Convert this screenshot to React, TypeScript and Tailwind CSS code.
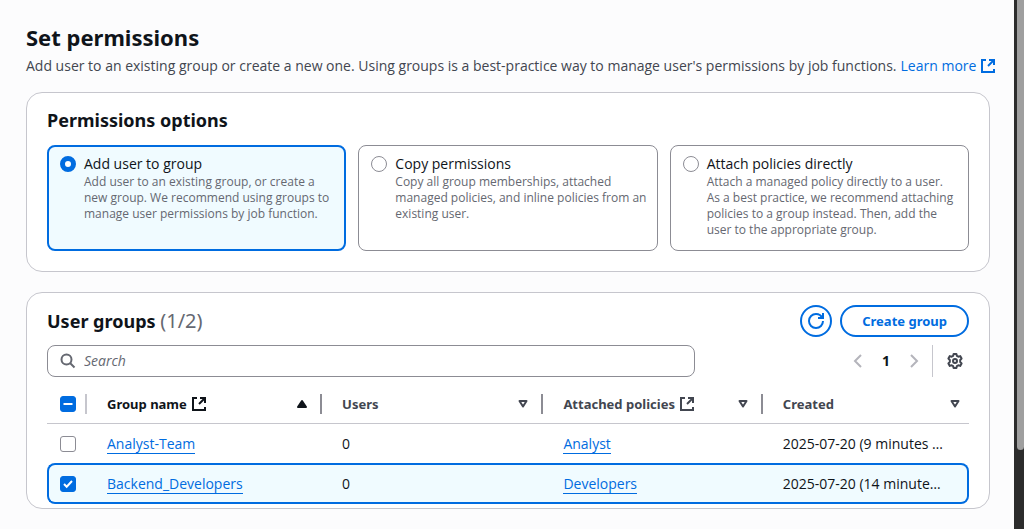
import { type ReactNode } from "react";

const ICON = "h-4 w-4 shrink-0";

function ExternalIcon() {
  return (
    <svg viewBox="0 0 16 16" className={ICON} fill="none" stroke="currentColor" strokeWidth="2" aria-hidden="true">
      <path d="M10 2h4v4" strokeLinecap="square" shapeRendering="crispEdges" />
      <path d="m8 8 6-6" />
      <path d="M6 2H2v12h12v-3" shapeRendering="crispEdges" />
    </svg>
  );
}

function SearchIcon() {
  return (
    <svg viewBox="0 0 16 16" className={ICON} fill="none" stroke="currentColor" strokeWidth="2" aria-hidden="true">
      <circle cx="6.5" cy="6.5" r="5" />
      <path d="m14.5 14.5-4.5-4.5" />
    </svg>
  );
}

function RefreshIcon() {
  return (
    <svg viewBox="0 0 16 16" className={ICON} fill="none" stroke="currentColor" strokeWidth="2" aria-hidden="true">
      <path d="M10 5h5V0" />
      <path d="M15 8a6.957 6.957 0 0 1-7 7 6.957 6.957 0 0 1-7-7 6.957 6.957 0 0 1 7-7 6.87 6.87 0 0 1 6.3 4" />
    </svg>
  );
}

function AngleIcon({ d }: { d: string }) {
  return (
    <svg viewBox="0 0 16 16" className={ICON} fill="none" stroke="currentColor" strokeWidth="2" aria-hidden="true">
      <path d={d} />
    </svg>
  );
}

function GearIcon() {
  return (
    <svg viewBox="0 0 16 16" className={ICON} fill="none" stroke="currentColor" strokeWidth="2" strokeLinejoin="round" aria-hidden="true">
      <path d="M6.6 1h2.8l.5 1.9 1.4.8 1.9-.6 1.4 2.4L13.2 7v2l1.4 1.5-1.4 2.4-1.9-.6-1.4.8L9.4 15H6.6l-.5-1.9-1.4-.8-1.9.6-1.4-2.4L2.8 9V7L1.4 5.5l1.4-2.4 1.9.6 1.4-.8z" />
      <circle cx="8" cy="8" r="2" />
    </svg>
  );
}

function SortIcon({ active = false }: { active?: boolean }) {
  return (
    <svg viewBox="0 0 16 16" className={ICON} aria-hidden="true">
      {active ? (
        <path d="M4 11h8L8 5z" fill="currentColor" stroke="currentColor" strokeWidth="2" strokeLinejoin="round" />
      ) : (
        <path d="M4.5 5h7L8 10.5z" fill="none" stroke="currentColor" strokeWidth="2" strokeLinejoin="round" />
      )}
    </svg>
  );
}

function Card({ children, className = "" }: { children: ReactNode; className?: string }) {
  return <section className={`rounded-2xl border border-[#c6c6cd] bg-white px-5 ${className}`}>{children}</section>;
}

const options = [
  {
    id: "add",
    title: "Add user to group",
    text: "Add user to an existing group, or create a new group. We recommend using groups to manage user permissions by job function.",
  },
  {
    id: "copy",
    title: "Copy permissions",
    text: "Copy all group memberships, attached managed policies, and inline policies from an existing user.",
  },
  {
    id: "attach",
    title: "Attach policies directly",
    text: "Attach a managed policy directly to a user. As a best practice, we recommend attaching policies to a group instead. Then, add the user to the appropriate group.",
  },
];

function OptionTile({ id, title, text, selected }: { id: string; title: string; text: string; selected: boolean }) {
  return (
    <label
      htmlFor={id}
      className={`flex gap-2 rounded-lg ${
        selected ? "border-2 border-[#006ce0] bg-[#f0fbff] py-[7px] pr-[9px] pl-[11px]" : "border border-[#8c8c94] bg-white py-2 pr-[10px] pl-3"
      }`}
    >
      <input
        id={id}
        type="radio"
        name="permission"
        defaultChecked={selected}
        className="mt-[2px] h-4 w-4 shrink-0 appearance-none rounded-full border border-[#8c8c94] bg-white checked:border-[5px] checked:border-[#006ce0]"
      />
      <span className="flex min-w-0 flex-col pb-1">
        <span className="text-sm leading-5 text-[#0f141a]">{title}</span>
        <span className="text-xs leading-4 text-[#656871]">{text}</span>
      </span>
    </label>
  );
}

const CHECKBOX = "block h-4 w-4 appearance-none rounded-[3px] border";

function Checkbox({ label, state }: { label: string; state: "on" | "off" | "mixed" }) {
  return (
    <span className="relative block h-4 w-4">
      <input
        type="checkbox"
        aria-label={label}
        defaultChecked={state === "on"}
        className={`${CHECKBOX} ${state === "off" ? "border-[#8c8c94] bg-white" : "border-[#006ce0] bg-[#006ce0]"}`}
      />
      {state !== "off" && (
        <svg viewBox="0 0 16 16" className="pointer-events-none absolute inset-0 h-4 w-4" fill="none" stroke="white" strokeWidth="2" aria-hidden="true">
          <path d={state === "on" ? "m4 8 2.7 2.7L12 5" : "M3.5 8h9"} />
        </svg>
      )}
    </span>
  );
}

const STRONG = "font-['Noto_Sans','Open_Sans',sans-serif] font-bold";

function HeaderCell({ children, external, active, last }: { children: ReactNode; external?: boolean; active?: boolean; last?: boolean }) {
  return (
    <th scope="col" className={`border-b border-[#c6c6cd] p-0 text-left ${active ? "text-[#0f141a]" : "text-[#424650]"}`}>
      <div className="flex h-[30px] items-center">
        <div className={`flex h-5 flex-1 items-center gap-1 pl-5 ${last ? "pr-[6px]" : "border-r-2 border-[#8c8c94] pr-[10px]"}`}>
          <span className={`text-[13px] leading-5 ${STRONG}`}>{children}</span>
          {external && <ExternalIcon />}
          <button type="button" aria-label="Sort" className="ml-auto">
            <SortIcon active={active} />
          </button>
        </div>
      </div>
    </th>
  );
}

const rows = [
  { name: "Analyst-Team", users: 0, policy: "Analyst", created: "2025-07-20 (9 minutes ago)", selected: false },
  { name: "Backend_Developers", users: 0, policy: "Developers", created: "2025-07-20 (14 minutes ago)", selected: true },
];

const LINK = "border-b border-[#006ce0] text-[#006ce0]";

export default function App() {
  return (
    <div className="flex h-screen overflow-hidden bg-[#fcfcfd] font-['Open_Sans','Noto_Sans',sans-serif] text-sm leading-5 text-[#0f141a]">
      <main className="flex min-w-0 flex-1 flex-col gap-5 pt-[22px] pr-6 pl-[26px]">
        <header className="-mb-1 flex flex-col gap-1">
          <h1 className={`text-[22px] leading-[30px] ${STRONG}`}>Set permissions</h1>
          <p className="flex items-center gap-1 whitespace-nowrap text-[#424650]">
            <span>
              Add user to an existing group or create a new one. Using groups is a best-practice way to manage user's permissions by job functions.
            </span>
            <a href="#" className="flex items-center gap-1 text-[#006ce0]">
              Learn more
              <ExternalIcon />
            </a>
          </p>
        </header>

        <Card className="pt-[15px] pb-5">
          <h2 className={`mb-[13px] text-lg leading-6 ${STRONG}`}>Permissions options</h2>
          <div className="grid grid-cols-3 gap-3">
            {options.map((o, i) => (
              <OptionTile key={o.id} {...o} selected={i === 0} />
            ))}
          </div>
        </Card>

        <Card className="pt-3 pb-1">
          <div className="flex items-center gap-2">
            <h2 className={`flex-1 text-lg leading-6 ${STRONG}`}>
              User groups <span className="text-xl leading-6 font-normal text-[#656871]">(1/2)</span>
            </h2>
            <button type="button" aria-label="Refresh" className="flex h-8 w-8 items-center justify-center rounded-full border-2 border-[#006ce0] text-[#006ce0]">
              <RefreshIcon />
            </button>
            <button type="button" className={`h-8 rounded-full border-2 border-[#006ce0] px-5 text-[13px] text-[#006ce0] ${STRONG}`}>
              Create group
            </button>
          </div>

          <div className="mt-2 flex items-center">
            <label className="flex h-8 w-[648px] items-center gap-2 rounded-lg border border-[#8c8c94] px-3 text-[#656871]">
              <SearchIcon />
              <input type="search" aria-label="Search" placeholder="Search" className="min-w-0 flex-1 outline-none placeholder:text-[#656871] placeholder:italic" />
            </label>
            <div className="ml-auto flex h-8 items-center">
              <button type="button" aria-label="Previous page" className="text-[#b4b4bb]">
                <AngleIcon d="M11 2 5 8l6 6" />
              </button>
              <button type="button" className="w-10 text-center font-bold">1</button>
              <button type="button" aria-label="Next page" className="text-[#b4b4bb]">
                <AngleIcon d="m5 2 6 6-6 6" />
              </button>
              <span className="mr-[14px] ml-[10px] h-8 w-px bg-[#c6c6cd]" />
              <button type="button" aria-label="Preferences" className="mr-[6px] text-[#424650]">
                <GearIcon />
              </button>
            </div>
          </div>

          <table className="mt-3 w-full table-fixed border-separate border-spacing-0">
            <colgroup>
              <col className="w-10" />
              <col className="w-[25.5%]" />
              <col className="w-[24%]" />
              <col className="w-[23.8%]" />
              <col />
            </colgroup>
            <thead>
              <tr className="h-[35px] align-top">
                <th scope="col" className="border-b border-[#c6c6cd] p-0">
                  <div className="flex h-[30px] items-center">
                    <div className="flex h-5 flex-1 items-center border-r-2 border-[#c6c6cd] pl-[13px]">
                      <Checkbox label="Select all groups" state="mixed" />
                    </div>
                  </div>
                </th>
                <HeaderCell external active>Group name</HeaderCell>
                <HeaderCell>Users</HeaderCell>
                <HeaderCell external>Attached policies</HeaderCell>
                <HeaderCell last>Created</HeaderCell>
              </tr>
            </thead>
            <tbody>
              {rows.map((r) => {
                const cell = r.selected ? "h-[41px] border-y-2 border-[#006ce0] bg-[#f0fbff]" : "h-[39px]";
                return (
                  <tr key={r.name}>
                    <td className={`${cell} p-0 ${r.selected ? "rounded-l-lg border-l-2 pl-[11px]" : "pl-[13px]"}`}>
                      <Checkbox label={`Select ${r.name}`} state={r.selected ? "on" : "off"} />
                    </td>
                    <td className={`${cell} py-0 pr-2 pl-5`}>
                      <a href="#" className={LINK}>{r.name}</a>
                    </td>
                    <td className={`${cell} py-0 pr-2 pl-5`}>{r.users}</td>
                    <td className={`${cell} py-0 pr-2 pl-5`}>
                      <a href="#" className={LINK}>{r.policy}</a>
                    </td>
                    <td className={`${cell} truncate py-0 pl-5 ${r.selected ? "rounded-r-lg border-r-2 pr-5" : "pr-5"}`}>{r.created}</td>
                  </tr>
                );
              })}
            </tbody>
          </table>
        </Card>
      </main>

      <div className="h-full w-[10px] shrink-0 bg-[#2c2c2c] pl-[3px]" aria-hidden="true">
        <div className="h-[85%] w-full rounded-b-md bg-[#9f9f9f]" />
      </div>
    </div>
  );
}
